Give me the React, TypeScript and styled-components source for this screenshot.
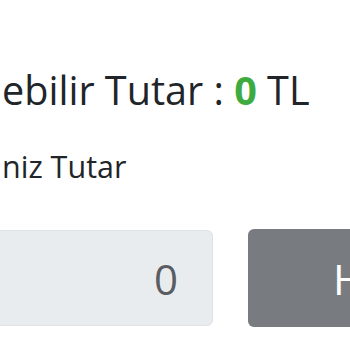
import React from "react";
import styled, { createGlobalStyle } from "styled-components";

const Global = createGlobalStyle`
  html, body { margin: 0; padding: 0; background: #ffffff; }
  body { font-family: "Open Sans", "Noto Sans", sans-serif; overflow: hidden; }
`;

const Page = styled.div`
  width: 350px;
  height: 350px;
  overflow: hidden;
  display: flex;
  flex-direction: column;
  padding-top: 64px;
  box-sizing: border-box;
`;

const Balance = styled.div`
  font-size: 39.6px;
  line-height: 52px;
  color: #212529;
  padding-left: 2px;
  white-space: nowrap;
`;

const Amount = styled.span`
  color: #3dab3f;
  font-weight: 700;
`;

const Label = styled.label`
  margin-top: 30px;
  font-size: 30.5px;
  line-height: 40px;
  color: #212529;
  padding-left: 2px;
  white-space: nowrap;
`;

const Row = styled.div`
  margin-top: 44px;
  margin-left: -40px;
  display: flex;
  gap: 35px;
`;

const AmountInput = styled.input`
  width: 253px;
  height: 96px;
  box-sizing: border-box;
  flex: none;
  background: #e9ecef;
  border: 1px solid #dfe2e6;
  border-radius: 6px;
  padding: 0 34px;
  text-align: right;
  font-family: "Open Sans", "Noto Sans", sans-serif;
  font-size: 42px;
  color: #595d61;
  outline: none;
`;

const Submit = styled.button`
  flex: none;
  width: 240px;
  height: 98px;
  margin-top: -1px;
  background: #787b7f;
  border: none;
  border-radius: 6px;
  color: #ffffff;
  font-family: "Open Sans", "Noto Sans", sans-serif;
  font-size: 42px;
  text-align: left;
  padding: 0 0 0 85px;
  white-space: nowrap;
`;

export default function App() {
  return (
    <>
      <Global />
      <Page>
        <Balance>
          ebilir Tutar : <Amount>0</Amount> TL
        </Balance>
        <Label>niz Tutar</Label>
        <Row>
          <AmountInput value="0" readOnly disabled />
          <Submit>Hesabıma Aktar</Submit>
        </Row>
      </Page>
    </>
  );
}
